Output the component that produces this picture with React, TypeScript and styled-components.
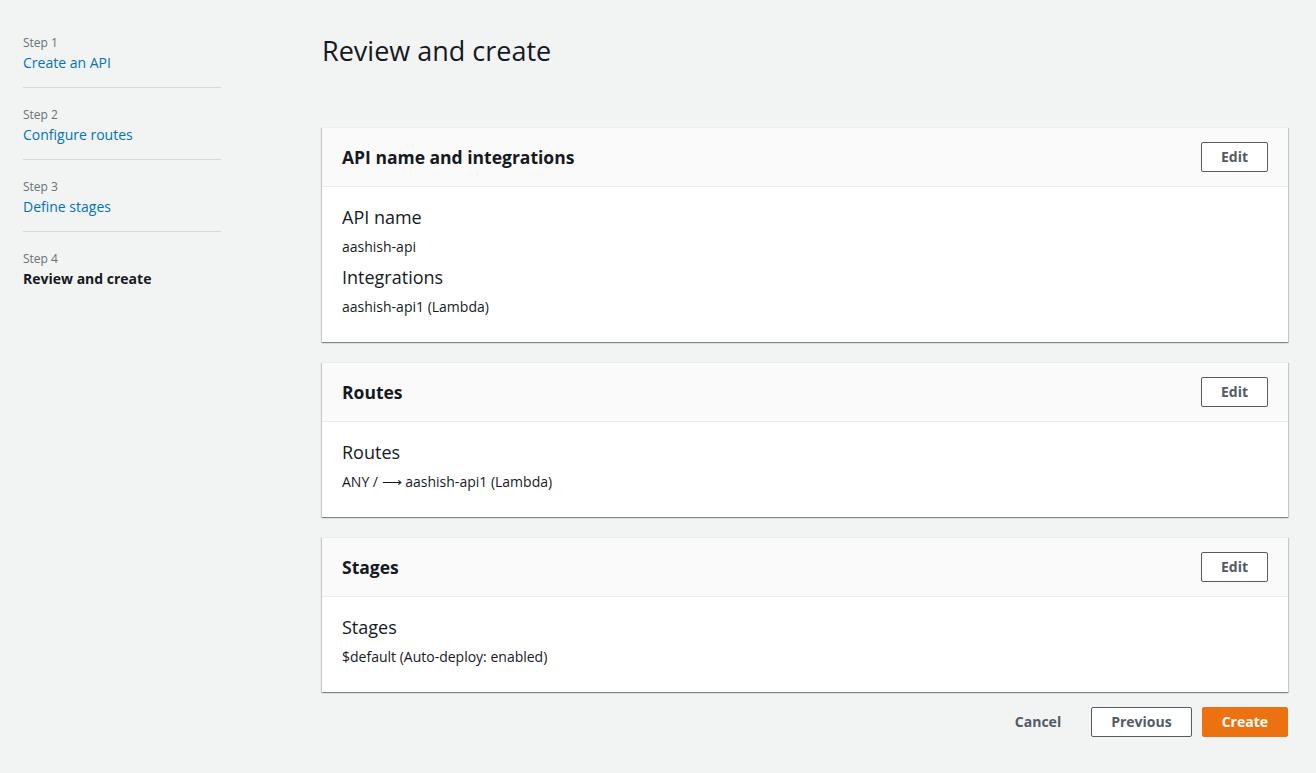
import React from "react";
import styled, { createGlobalStyle } from "styled-components";

const GlobalStyle = createGlobalStyle`
  html, body {
    margin: 0;
    padding: 0;
    background: #f2f3f3;
    font-family: "Open Sans", "Noto Sans", Arial, sans-serif;
    color: #16191f;
    -webkit-font-smoothing: antialiased;
  }
  * { box-sizing: border-box; }
`;

const Page = styled.div`
  display: grid;
  grid-template-columns: 198px 1fr;
  column-gap: 101px;
  padding: 0 28px 0 23px;
  min-height: 773px;
`;

const Sidebar = styled.nav`
  display: flex;
  flex-direction: column;
  padding-top: 35px;
`;

const StepItem = styled.div<{ $last?: boolean }>`
  display: flex;
  flex-direction: column;
  gap: 1px;
  padding-bottom: 13px;
  margin-bottom: 19px;
  border-bottom: ${(p) => (p.$last ? "none" : "1px solid #d5dbdb")};
`;

const StepLabel = styled.span`
  font-size: 12px;
  line-height: 16px;
  color: #687078;
`;

const StepLink = styled.a<{ $active?: boolean }>`
  font-size: 14px;
  line-height: 22px;
  color: ${(p) => (p.$active ? "#16191f" : "#0073bb")};
  font-weight: ${(p) => (p.$active ? 700 : 400)};
  text-decoration: none;
  cursor: pointer;
`;

const Main = styled.main`
  display: flex;
  flex-direction: column;
  padding-top: 33px;
`;

const Title = styled.h1`
  margin: 0 0 58px;
  font-size: 27px;
  line-height: 36px;
  font-weight: 400;
  color: #16191f;
`;

const Cards = styled.div`
  display: flex;
  flex-direction: column;
  gap: 20px;
`;

const Card = styled.section`
  background: #ffffff;
  border-top: 1px solid #eaeded;
  box-shadow: 0 1px 1px 0 rgba(0, 28, 36, 0.3),
    1px 1px 1px 0 rgba(0, 28, 36, 0.15),
    -1px 1px 1px 0 rgba(0, 28, 36, 0.15);
`;

const CardHeader = styled.header`
  display: flex;
  align-items: center;
  justify-content: space-between;
  height: 59px;
  padding: 0 20px;
  background: #fafafa;
  border-bottom: 1px solid #eaeded;
`;

const CardTitle = styled.h2`
  margin: 0;
  font-size: 17.5px;
  line-height: 22px;
  font-weight: 700;
  color: #16191f;
`;

const CardBody = styled.div`
  display: flex;
  flex-direction: column;
  gap: 8px;
  padding: 19px 20px 24px;
`;

const FieldLabel = styled.div`
  font-size: 18px;
  line-height: 22px;
  color: #16191f;
`;

const FieldValue = styled.div`
  font-size: 14px;
  line-height: 22px;
  color: #16191f;
`;

const Button = styled.button<{ $variant?: "normal" | "primary" | "link" }>`
  height: 30px;
  padding: 0 19px;
  font-family: inherit;
  font-size: 14px;
  font-weight: 700;
  line-height: 22px;
  border-radius: 2px;
  cursor: pointer;
  border: 1px solid
    ${(p) =>
      p.$variant === "primary"
        ? "#ec7211"
        : p.$variant === "link"
        ? "transparent"
        : "#545b64"};
  background: ${(p) =>
    p.$variant === "primary"
      ? "#ec7211"
      : p.$variant === "link"
      ? "transparent"
      : "#ffffff"};
  color: ${(p) => (p.$variant === "primary" ? "#ffffff" : "#545b64")};
`;

const Actions = styled.div`
  display: flex;
  justify-content: flex-end;
  gap: 10px;
  margin-top: 15px;
`;

const steps = [
  { label: "Step 1", title: "Create an API" },
  { label: "Step 2", title: "Configure routes" },
  { label: "Step 3", title: "Define stages" },
  { label: "Step 4", title: "Review and create", active: true },
];

const sections = [
  {
    title: "API name and integrations",
    fields: [
      { label: "API name", value: "aashish-api" },
      { label: "Integrations", value: "aashish-api1 (Lambda)" },
    ],
  },
  {
    title: "Routes",
    fields: [{ label: "Routes", value: "ANY / \u27F6 aashish-api1 (Lambda)" }],
  },
  {
    title: "Stages",
    fields: [{ label: "Stages", value: "$default (Auto-deploy: enabled)" }],
  },
];

export default function App() {
  return (
    <>
      <GlobalStyle />
      <Page>
        <Sidebar>
          {steps.map((s, i) => (
            <StepItem key={s.label} $last={i === steps.length - 1}>
              <StepLabel>{s.label}</StepLabel>
              <StepLink $active={s.active}>{s.title}</StepLink>
            </StepItem>
          ))}
        </Sidebar>
        <Main>
          <Title>Review and create</Title>
          <Cards>
            {sections.map((sec) => (
              <Card key={sec.title}>
                <CardHeader>
                  <CardTitle>{sec.title}</CardTitle>
                  <Button>Edit</Button>
                </CardHeader>
                <CardBody>
                  {sec.fields.map((f) => (
                    <React.Fragment key={f.label}>
                      <FieldLabel>{f.label}</FieldLabel>
                      <FieldValue>{f.value}</FieldValue>
                    </React.Fragment>
                  ))}
                </CardBody>
              </Card>
            ))}
          </Cards>
          <Actions>
            <Button $variant="link">Cancel</Button>
            <Button>Previous</Button>
            <Button $variant="primary">Create</Button>
          </Actions>
        </Main>
      </Page>
    </>
  );
}
